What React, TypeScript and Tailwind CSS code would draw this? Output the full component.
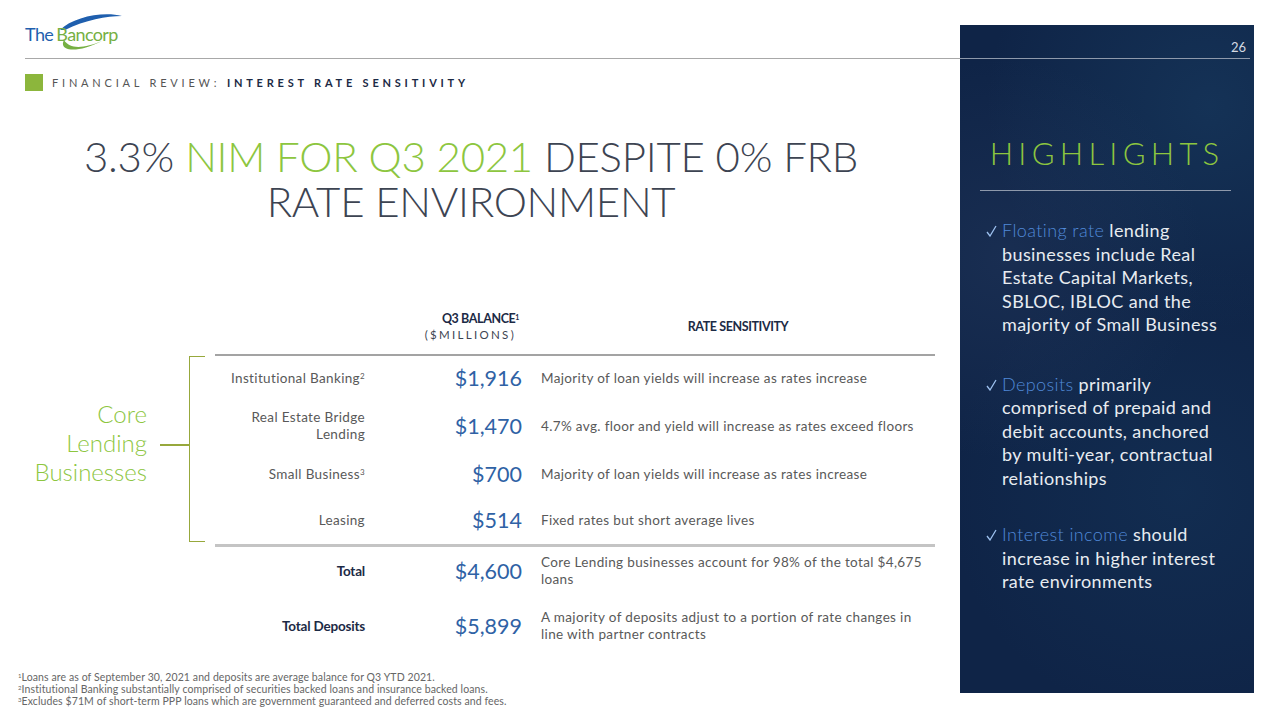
import React from "react";

const sans = "font-['Lato','Liberation_Sans',sans-serif]";

function Logo() {
  return (
    <div className="relative h-[40px] w-[100px]">
      <svg
        className="absolute left-0 top-0"
        width="100"
        height="40"
        viewBox="0 0 100 40"
        fill="none"
      >
        {/* blue swoosh over the name */}
        <path d="M35 18 C48 5 78 -1 97 4 C82 4 60 8 40 18 Z" fill="#1f5fae" />
        {/* green swoosh under the name */}
        <path d="M39 28 C33 39 52 42 77 29 C60 36 45 38 39 28 Z" fill="#76b043" />
      </svg>
      <div
        className={`absolute left-0 top-[12px] flex items-baseline text-[18px] leading-[20px] tracking-[-0.6px] ${sans}`}
      >
        <span className="text-[#1f5fae]">The</span>
        <span className="ml-[3px] text-[#76b043]">Bancorp</span>
      </div>
    </div>
  );
}

function Check() {
  return (
    <span className="w-[16px] shrink-0 pt-[6px]">
      <svg width="11" height="12" viewBox="0 0 11 12" fill="none">
        <path d="M1 7 L4 11 L10 1" stroke="#9cc0ee" strokeWidth="1.3" />
      </svg>
    </span>
  );
}

type Row = { label: React.ReactNode; value: string; desc: React.ReactNode; h: string };

const coreRows: Row[] = [
  {
    label: (
      <>
        Institutional Banking<sup className="text-[8px]">2</sup>
      </>
    ),
    value: "$1,916",
    desc: "Majority of loan yields will increase as rates increase",
    h: "h-[44px]",
  },
  {
    label: (
      <>
        Real Estate Bridge
        <br />
        Lending
      </>
    ),
    value: "$1,470",
    desc: "4.7% avg. floor and yield will increase as rates exceed floors",
    h: "h-[52px]",
  },
  {
    label: (
      <>
        Small Business<sup className="text-[8px]">3</sup>
      </>
    ),
    value: "$700",
    desc: "Majority of loan yields will increase as rates increase",
    h: "h-[44px]",
  },
  {
    label: "Leasing",
    value: "$514",
    desc: "Fixed rates but short average lives",
    h: "h-[48px]",
  },
];

function TableRow({ row, bold }: { row: Row; bold?: boolean }) {
  return (
    <div className={`flex items-center ${row.h}`}>
      <div
        className={`w-[150px] text-right text-[13.5px] leading-[17px] ${
          bold
            ? "font-bold tracking-[-0.2px] text-[#1c2a45]"
            : "tracking-[0.35px] text-[#595959]"
        }`}
      >
        {row.label}
      </div>
      <div className="w-[157px] text-right text-[21.5px] leading-[26px] text-[#2f62a5]">
        {row.value}
      </div>
      <div className="flex-1 pl-[19px] text-[13.5px] leading-[17px] tracking-[0.35px] text-[#595959]">
        {row.desc}
      </div>
    </div>
  );
}

export default function App() {
  return (
    <div className={`flex h-[720px] w-[1280px] overflow-hidden bg-white ${sans}`}>
      {/* left slide body */}
      <div className="flex w-[960px] flex-col">
        <div className="h-[58px] pl-[25px] pt-[12px]">
          <Logo />
        </div>
        <div className="ml-[25px] h-px bg-[#a8a8a8]" />

        <div className="mt-[15px] flex items-center pl-[25px]">
          <div className="h-[17px] w-[18px] bg-[#8cb63c]" />
          <div className="ml-[9px] text-[11px] leading-[14px] tracking-[0.345em] text-[#555]">
            FINANCIAL REVIEW:{" "}
            <span className="font-bold text-[#1c2a45]">INTEREST RATE SENSITIVITY</span>
          </div>
        </div>

        <h1 className="mt-[43px] w-[942px] text-center text-[42px] font-light leading-[45px] tracking-[-0.3px] text-[#3d4452]">
          3.3% <span className="text-[#8dc63f]">NIM FOR Q3 2021</span> DESPITE 0% FRB
          <br />
          RATE ENVIRONMENT
        </h1>

        {/* table */}
        <div className="ml-[215px] mt-[87px] w-[720px]">
          <div className="flex items-center pb-[11px]">
            <div className="w-[150px]" />
            <div className="w-[154px] text-right leading-[16px]">
              <div className="text-[12.5px] font-bold tracking-[-0.4px] text-[#1c2a45]">
                Q3 BALANCE<sup className="text-[7px]">1</sup>
              </div>
              <div className="pr-[3px] text-[11.5px] tracking-[0.2em] text-[#3d4452]">($MILLIONS)</div>
            </div>
            <div className="flex-1 pl-[22px] text-center text-[12.5px] font-bold tracking-[-0.4px] text-[#1c2a45]">
              RATE SENSITIVITY
            </div>
          </div>
          <div className="h-[2px] bg-[#a3a3a3]" />
        </div>

        <div className="flex">
          <div className="flex w-[215px] items-center">
            <div className="w-[147px] pb-[16px] text-right text-[24px] font-light leading-[29px] text-[#8dc63f]">
              Core
              <br />
              Lending
              <br />
              Businesses
            </div>
            <div className="mb-[10px] ml-[13px] h-[1.5px] w-[29px] bg-[#97a83c]" />
            <div className="mb-[2px] w-[16px] self-stretch border-y-[1.5px] border-l-[1.5px] border-[#97a83c]" />
          </div>
          <div className="w-[720px]">
            {coreRows.map((r, i) => (
              <TableRow key={i} row={r} />
            ))}
          </div>
        </div>

        <div className="ml-[215px] w-[720px]">
          <div className="h-[3px] bg-[#c4c4c4]" />
          <TableRow
            bold
            row={{
              label: "Total",
              value: "$4,600",
              desc: (
                <>
                  Core Lending businesses account for 98% of the total $4,675
                  <br />
                  loans
                </>
              ),
              h: "h-[48px]",
            }}
          />
          <TableRow
            bold
            row={{
              label: "Total Deposits",
              value: "$5,899",
              desc: (
                <>
                  A majority of deposits adjust to a portion of rate changes in
                  <br />
                  line with partner contracts
                </>
              ),
              h: "h-[62px]",
            }}
          />
        </div>

        <div className="mt-auto pb-[13px] pl-[18px] text-[10.5px] leading-[12px] tracking-[0.1px] text-[#666]">
          <div>
            <sup className="text-[6px]">1</sup>Loans are as of September 30, 2021 and deposits are average balance for Q3 YTD 2021.
          </div>
          <div>
            <sup className="text-[6px]">2</sup>Institutional Banking substantially comprised of securities backed loans and insurance backed loans.
          </div>
          <div>
            <sup className="text-[6px]">3</sup>Excludes $71M of short-term PPP loans which are government guaranteed and deferred costs and fees.
          </div>
        </div>
      </div>

      {/* highlights panel */}
      <div className="mt-[25px] flex h-[668px] w-[294px] flex-col bg-[#0f2447] bg-[radial-gradient(circle_at_15%_35%,rgba(70,90,130,0.18),transparent_40%),radial-gradient(circle_at_85%_12%,rgba(40,100,140,0.22),transparent_35%),radial-gradient(circle_at_75%_70%,rgba(30,80,120,0.2),transparent_45%)]">
        <div className="flex h-[33px] items-start justify-end pr-[8px] pt-[14px] text-[13px] leading-[16px] text-[#d5dae3]">
          26
        </div>
        <div className="mr-[4px] h-px bg-[#8e99ab]" />

        <div className="mt-[76px] text-center text-[31px] font-light leading-[36px] tracking-[0.17em] text-[#8dc63f]">
          HIGHLIGHTS
        </div>
        <div className="ml-[20px] mr-[23px] mt-[19px] h-px bg-[#8e99ab]" />

        <div className="pl-[26px] text-[18px] leading-[23.5px] tracking-[0.4px] text-[#e8ecf1]">
          <div className="mt-[28px] flex">
            <Check />
            <div>
              <span className="font-light text-[#5089d8]">Floating rate</span> lending
              <br />
              businesses include Real
              <br />
              Estate Capital Markets,
              <br />
              SBLOC, IBLOC and the
              <br />
              majority of Small Business
            </div>
          </div>
          <div className="mt-[36px] flex">
            <Check />
            <div>
              <span className="font-light text-[#5089d8]">Deposits</span> primarily
              <br />
              comprised of prepaid and
              <br />
              debit accounts, anchored
              <br />
              by multi-year, contractual
              <br />
              relationships
            </div>
          </div>
          <div className="mt-[33px] flex">
            <Check />
            <div>
              <span className="font-light text-[#5089d8]">Interest income</span> should
              <br />
              increase in higher interest
              <br />
              rate environments
            </div>
          </div>
        </div>
      </div>
    </div>
  );
}
